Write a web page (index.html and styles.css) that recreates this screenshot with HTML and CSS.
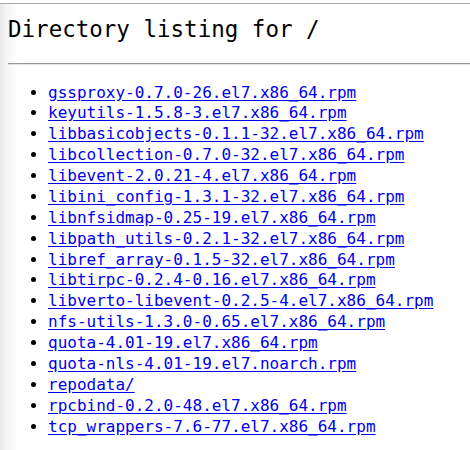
FILE: index.html
```html
<!DOCTYPE html>
<html>
<head>
<meta charset="utf-8">
<title>Directory listing for /</title>
<link rel="stylesheet" href="styles.css">
</head>
<body>
<div class="frame">
<h2 class="title">Directory listing for /</h2>
<hr class="rule">
<ul class="listing">
<li><a href="#">gssproxy-0.7.0-26.el7.x86_64.rpm</a></li>
<li><a href="#">keyutils-1.5.8-3.el7.x86_64.rpm</a></li>
<li><a href="#">libbasicobjects-0.1.1-32.el7.x86_64.rpm</a></li>
<li><a href="#">libcollection-0.7.0-32.el7.x86_64.rpm</a></li>
<li><a href="#">libevent-2.0.21-4.el7.x86_64.rpm</a></li>
<li><a href="#">libini_config-1.3.1-32.el7.x86_64.rpm</a></li>
<li><a href="#">libnfsidmap-0.25-19.el7.x86_64.rpm</a></li>
<li><a href="#">libpath_utils-0.2.1-32.el7.x86_64.rpm</a></li>
<li><a href="#">libref_array-0.1.5-32.el7.x86_64.rpm</a></li>
<li><a href="#">libtirpc-0.2.4-0.16.el7.x86_64.rpm</a></li>
<li><a href="#">libverto-libevent-0.2.5-4.el7.x86_64.rpm</a></li>
<li><a href="#">nfs-utils-1.3.0-0.65.el7.x86_64.rpm</a></li>
<li><a href="#">quota-4.01-19.el7.x86_64.rpm</a></li>
<li><a href="#">quota-nls-4.01-19.el7.noarch.rpm</a></li>
<li><a href="#">repodata/</a></li>
<li><a href="#">rpcbind-0.2.0-48.el7.x86_64.rpm</a></li>
<li><a href="#">tcp_wrappers-7.6-77.el7.x86_64.rpm</a></li>
</ul>
</div>
</body>
</html>
```
FILE: styles.css
```css
html, body {
  margin: 0;
  padding: 0;
  background: #fff;
}
body {
  font-family: "DejaVu Sans Mono", monospace;
  font-size: 16px;
  color: #000;
  height: 450px;
  overflow: hidden;
}
.frame {
  margin-top: 3px;
  border-top: 1px solid #a8a8a8;
  padding: 0 0 0 8px;
  height: 446px;
  background: linear-gradient(to right, #e9e9e9 0px, #f6f6f6 8px, #ffffff 18px);
}
.title {
  margin: 12px 0 0 0;
  font-size: 22.5px;
  font-weight: normal;
  line-height: 26px;
}
.rule {
  margin: 21px 0 0 0;
  border: 0;
  border-top: 1px solid #9a9a9a;
  border-bottom: 1px solid #e4e4e4;
  height: 0;
}
.listing {
  margin: 17.5px 0 0 0;
  padding-left: 40px;
  line-height: 20.875px;
}
.listing a {
  color: #0000ee;
  text-decoration: underline;
  text-underline-offset: 2px;
}
```
